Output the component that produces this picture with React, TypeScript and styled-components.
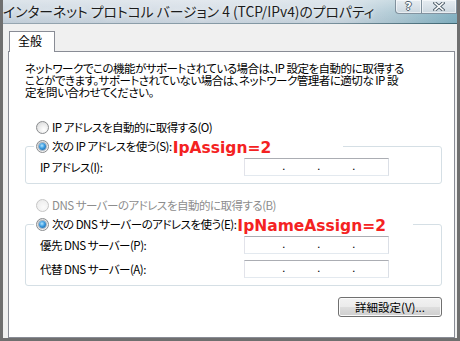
import React from "react";
import styled, { createGlobalStyle } from "styled-components";

const GlobalStyle = createGlobalStyle`
  html, body { margin: 0; padding: 0; background: #ffffff; }
  body { width: 460px; height: 341px; overflow: hidden; }
  * { box-sizing: border-box; }
`;

const JP = `"Noto Sans CJK JP", "Noto Sans", sans-serif`;

const Window = styled.div`
  width: 460px;
  height: 341px;
  border: 3px solid #6f6f6f;
  border-top: 0;
  display: flex;
  flex-direction: column;
  overflow: hidden;
  font-family: ${JP};
  font-feature-settings: "palt";
`;

const TitleBar = styled.div`
  height: 23px;
  flex: 0 0 23px;
  display: flex;
  align-items: flex-start;
  background:
    linear-gradient(180deg, rgba(255,255,255,0.35) 0%, rgba(255,255,255,0.05) 55%, rgba(120,140,155,0.12) 100%),
    linear-gradient(90deg, #cbd6e0 0%, #d3dce5 45%, #cdd9e2 75%, #a9c6d2 88%, #7fb0c1 100%);
`;

const TitleRule = styled.div`
  height: 1px;
  flex: 0 0 1px;
  background: linear-gradient(90deg, #97a6b1 0%, #7d939f 70%, #3f6773 100%);
`;

const TitleText = styled.div`
  flex: 1;
  font-size: 13.8px;
  line-height: 23px;
  color: #1c1c1c;
  white-space: nowrap;
  text-shadow: 0 0 5px rgba(255,255,255,0.9);
`;

const CaptionButtons = styled.div`
  display: flex;
  height: 14px;
`;

const CaptionButton = styled.div<{ $w: number; $first?: boolean }>`
  width: ${(p) => p.$w}px;
  height: 14px;
  display: flex;
  align-items: center;
  justify-content: center;
  border: 1px solid rgba(90, 110, 125, 0.7);
  border-top: 0;
  border-left-width: ${(p) => (p.$first ? 1 : 0)}px;
  border-bottom-left-radius: ${(p) => (p.$first ? 4 : 0)}px;
  background: linear-gradient(180deg, #e6ecf1 0%, #d7e0e7 60%, #cbd7df 100%);
  box-shadow: inset 0 0 0 1px rgba(255,255,255,0.55);
  font-family: "DejaVu Sans", sans-serif;
  font-weight: bold;
  font-size: 11px;
  line-height: 12px;
  color: #ffffff;
  text-shadow: -1px 0 #50606c, 1px 0 #50606c, 0 -1px #50606c, 0 1px #50606c;
`;

const Client = styled.div`
  flex: 1;
  min-height: 0;
  background: #f0f0f0;
  padding: 7px 2px 0 5px;
  display: flex;
  flex-direction: column;
  overflow: hidden;
`;

const TabStrip = styled.div`
  display: flex;
  padding-left: 1px;
  position: relative;
  z-index: 1;
`;

const Tab = styled.div`
  width: 46px;
  height: 21px;
  border: 1px solid #898c95;
  border-bottom: 0;
  background: #ffffff;
  margin-bottom: -1px;
  font-size: 12px;
  line-height: 17px;
  padding-left: 8px;
  color: #000;
`;

const Panel = styled.div`
  flex: 1;
  background: #ffffff;
  border: 1px solid #898c95;
  padding: 10px 12px 0 16px;
  display: flex;
  flex-direction: column;
`;

const Description = styled.div`
  font-size: 11.5px;
  line-height: 12px;
  letter-spacing: -0.5px;
  color: #000;
`;

const Line = styled.div`
  white-space: nowrap;
`;

const RadioRow = styled.div<{ $top: number; $disabled?: boolean }>`
  display: flex;
  align-items: center;
  gap: 3px;
  height: 16px;
  padding-left: 11px;
  margin-top: ${(p) => p.$top}px;
  font-size: 11.5px;
  letter-spacing: -0.5px;
  color: ${(p) => (p.$disabled ? "#8d8d8d" : "#000")};
  white-space: nowrap;
`;

const Radio = styled.span<{ $checked?: boolean; $disabled?: boolean }>`
  flex: 0 0 13px;
  width: 13px;
  height: 13px;
  border-radius: 50%;
  border: 1px solid ${(p) => (p.$disabled ? "#c6c6c6" : "#8a8c8e")};
  background: ${(p) =>
    p.$disabled
      ? "radial-gradient(circle at 60% 65%, #fbfbfb 0%, #f0f0f0 60%, #e6e6e6 100%)"
      : "radial-gradient(circle at 62% 68%, #ffffff 0%, #ebebeb 50%, #cfd0d1 100%)"};
  display: flex;
  align-items: center;
  justify-content: center;
  &::after {
    content: "";
    display: ${(p) => (p.$checked ? "block" : "none")};
    width: 7px;
    height: 7px;
    border-radius: 50%;
    background: radial-gradient(circle at 42% 38%, #b4e6ff 0%, #3a9be0 45%, #15508a 100%);
    box-shadow: 0 0 0 1px rgba(30, 70, 110, 0.35);
  }
`;

const Fieldset = styled.fieldset`
  margin: 3px 0 0;
  padding: 4px 0 7px 0;
  border: 1px solid #d5dfe5;
  border-radius: 3px;
  min-width: 0;
`;

const Legend = styled.legend<{ $w: number }>`
  margin-left: 8px;
  padding: 0 0 0 2px;
  width: ${(p) => p.$w}px;
  height: 16px;
  display: flex;
  align-items: center;
  gap: 3px;
  font-size: 11.5px;
  letter-spacing: -0.5px;
  color: #000;
  white-space: nowrap;
`;

const Annotation = styled.span`
  font-family: "DejaVu Sans", Verdana, sans-serif;
  font-weight: bold;
  font-size: 15.5px;
  line-height: 16px;
  letter-spacing: 0;
  color: #f42222;
  transform: translateY(2px);
  margin-left: -2px;
`;

const FieldRow = styled.div<{ $top?: number }>`
  display: flex;
  align-items: center;
  height: 18px;
  padding-left: 14px;
  margin-top: ${(p) => p.$top ?? 0}px;
  font-size: 11.5px;
  letter-spacing: -0.5px;
  color: #000;
  white-space: nowrap;
`;

const FieldLabel = styled.span`
  width: 204px;
`;

const IpBox = styled.div`
  width: 145px;
  height: 18px;
  border: 1px solid;
  border-color: #abadb3 #dbdfe6 #e3e9ef #e2e3ea;
  background: #ffffff;
  display: flex;
  align-items: center;
  padding-left: 2px;
  font-family: "DejaVu Sans", sans-serif;
  font-size: 11px;
  line-height: 16px;
  letter-spacing: 0;
`;

const Octet = styled.span`
  flex: 0 0 35px;
`;

const Dot = styled.span`
  width: 0;
  overflow: visible;
`;

const ButtonRow = styled.div`
  display: flex;
  justify-content: flex-end;
  margin-top: 11px;
`;

const PushButton = styled.button`
  width: 104px;
  height: 20px;
  border: 1px solid #707070;
  border-radius: 3px;
  background: linear-gradient(180deg, #f2f2f2 0%, #ebebeb 48%, #dddddd 52%, #cfcfcf 100%);
  box-shadow: inset 0 0 0 1px #fbfbfb;
  font-family: ${JP};
  font-feature-settings: "palt";
  font-size: 11.5px;
  line-height: 16px;
  color: #000;
  padding: 0;
`;

function IpField() {
  return (
    <IpBox>
      <Octet />
      <Dot>.</Dot>
      <Octet />
      <Dot>.</Dot>
      <Octet />
      <Dot>.</Dot>
      <Octet />
    </IpBox>
  );
}

export default function App() {
  return (
    <>
      <GlobalStyle />
      <Window>
        <TitleBar>
          <TitleText>インターネット プロトコル バージョン 4 (TCP/IPv4)のプロパティ</TitleText>
          <CaptionButtons>
            <CaptionButton $w={27} $first>?</CaptionButton>
            <CaptionButton $w={35}>
              <svg width="12" height="9" viewBox="0 0 12 9">
                <path d="M2 1 L10 8 M10 1 L2 8" stroke="#50606c" strokeWidth="3.4" strokeLinecap="square" />
                <path d="M2 1 L10 8 M10 1 L2 8" stroke="#ffffff" strokeWidth="1.6" strokeLinecap="square" />
              </svg>
            </CaptionButton>
          </CaptionButtons>
        </TitleBar>
        <TitleRule />
        <Client>
          <TabStrip>
            <Tab>全般</Tab>
          </TabStrip>
          <Panel>
            <Description>
              <Line>ネットワークでこの機能がサポートされている場合は、IP 設定を自動的に取得する</Line>
              <Line>ことができます。サポートされていない場合は、ネットワーク管理者に適切な IP 設</Line>
              <Line>定を問い合わせてください。</Line>
            </Description>

            <RadioRow $top={21}>
              <Radio />
              <span>IP アドレスを自動的に取得する(O)</span>
            </RadioRow>

            <Fieldset>
              <Legend $w={309}>
                <Radio $checked />
                <span>次の IP アドレスを使う(S):</span>
                <Annotation>IpAssign=2</Annotation>
              </Legend>
              <FieldRow>
                <FieldLabel>IP アドレス(I):</FieldLabel>
                <IpField />
              </FieldRow>
            </Fieldset>

            <RadioRow $top={13} $disabled>
              <Radio $disabled />
              <span>DNS サーバーのアドレスを自動的に取得する(B)</span>
            </RadioRow>

            <Fieldset>
              <Legend $w={379}>
                <Radio $checked />
                <span>次の DNS サーバーのアドレスを使う(E):</span>
                <Annotation>IpNameAssign=2</Annotation>
              </Legend>
              <FieldRow>
                <FieldLabel>優先 DNS サーバー(P):</FieldLabel>
                <IpField />
              </FieldRow>
              <FieldRow $top={6}>
                <FieldLabel>代替 DNS サーバー(A):</FieldLabel>
                <IpField />
              </FieldRow>
            </Fieldset>

            <ButtonRow>
              <PushButton type="button">詳細設定(V)...</PushButton>
            </ButtonRow>
          </Panel>
        </Client>
      </Window>
    </>
  );
}
